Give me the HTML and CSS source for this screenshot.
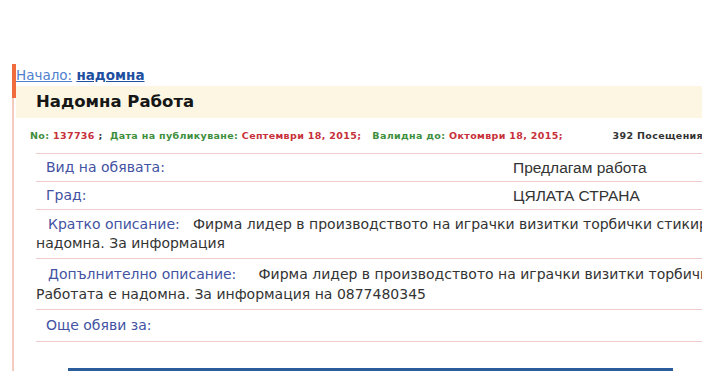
FILE: index.html
```html
<!doctype html>
<html>
<head>
  <meta charset="utf-8">
  <title>Надомна Работа</title>
  <link rel="stylesheet" href="styles.css">
</head>
<body>
  <div id="page">
    <div class="box">
      <div class="crumbs"><a href="#" class="home">Начало:</a> <a href="#" class="cat">надомна</a></div>
      <h1 class="title">Надомна Работа</h1>
      <div class="meta">
        <span class="g">No:</span> <span class="r">137736</span> ;&nbsp;
        <span class="g">Дата на публикуване:</span> <span class="r">Септември 18, 2015;</span>&nbsp;&nbsp;
        <span class="g">Валидна до:</span> <span class="r">Октомври 18, 2015;</span>
        <span class="visits">392 Посещения</span>
      </div>
      <div class="rows">
        <div class="row cols">
          <span class="label">Вид на обявата:</span>
          <span class="value">Предлагам работа</span>
        </div>
        <div class="row cols">
          <span class="label">Град:</span>
          <span class="value">ЦЯЛАТА СТРАНА</span>
        </div>
        <div class="row multi">
          <span class="label">Кратко описание:</span>&nbsp;&nbsp;
          Фирма лидер в производството на играчки визитки торбички стикири търси служители. Работата е<br>надомна. За информация
        </div>
        <div class="row multi more">
          <span class="label">Допълнително описание:</span>&nbsp;&nbsp;&nbsp;&nbsp;
          Фирма лидер в производството на играчки визитки торбички стикири търси служители.<br>Работата е надомна. За информация на 0877480345
        </div>
        <div class="row last">
          <span class="label">Още обяви за:</span>
        </div>
      </div>
      <div class="banner"></div>
    </div>
  </div>
</body>
</html>
```

FILE: styles.css
```css
html, body {
  margin: 0;
  background: #fff;
  overflow: hidden;
}
body {
  font-family: "DejaVu Sans", Verdana, sans-serif;
  color: #333;
}
#page {
  width: 1000px;
  padding: 64px 0 0 12px;
}
.box {
  position: relative;
  border-left: 2px solid #f5cbc0;
  padding-bottom: 40px;
}
.box::before {
  content: "";
  position: absolute;
  left: -2px;
  top: 0;
  width: 4px;
  height: 34px;
  background: #f06c3c;
}
.crumbs {
  height: 22px;
  line-height: 22px;
  padding-left: 2px;
  font-size: 13.5px;
}
.crumbs a {
  text-decoration: underline;
}
.home {
  color: #4f7fcf;
}
.cat {
  color: #1f4f9f;
  font-weight: bold;
}
.title {
  margin: 0 0 0 2px;
  height: 32px;
  line-height: 31px;
  padding-left: 20px;
  background: #fcf6e3;
  font-size: 16.5px;
  color: #161616;
}
.meta {
  height: 35px;
  line-height: 35px;
  padding-left: 16px;
  font-size: 9.5px;
  font-weight: bold;
  letter-spacing: 0.35px;
  white-space: nowrap;
}
.g {
  color: #3d8f3d;
}
.r {
  color: #c7303a;
}
.visits {
  color: #333;
  margin-left: 46px;
}
.rows {
  margin-left: 22px;
  border-top: 1px solid #f0cccc;
  font-size: 14px;
  line-height: 19px;
}
.row {
  padding: 4px 0;
  border-bottom: 1px solid #f0cccc;
  white-space: nowrap;
}
.row .label {
  color: #4352a2;
  margin-left: 10px;
}
.cols {
  display: grid;
  grid-template-columns: 477px 1fr;
}
.value {
  font-family: "Liberation Sans", Arial, sans-serif;
  font-size: 15.5px;
}
.multi {
  padding: 5px 0;
}
.more {
  line-height: 20px;
}
.multi .label {
  margin-left: 12px;
}
.last {
  padding: 6px 0;
}
.banner {
  margin: 26px 0 0 54px;
  width: 605px;
  height: 10px;
  border-top: 3px solid #2b5c9c;
  background: #e8eff8;
}
```
